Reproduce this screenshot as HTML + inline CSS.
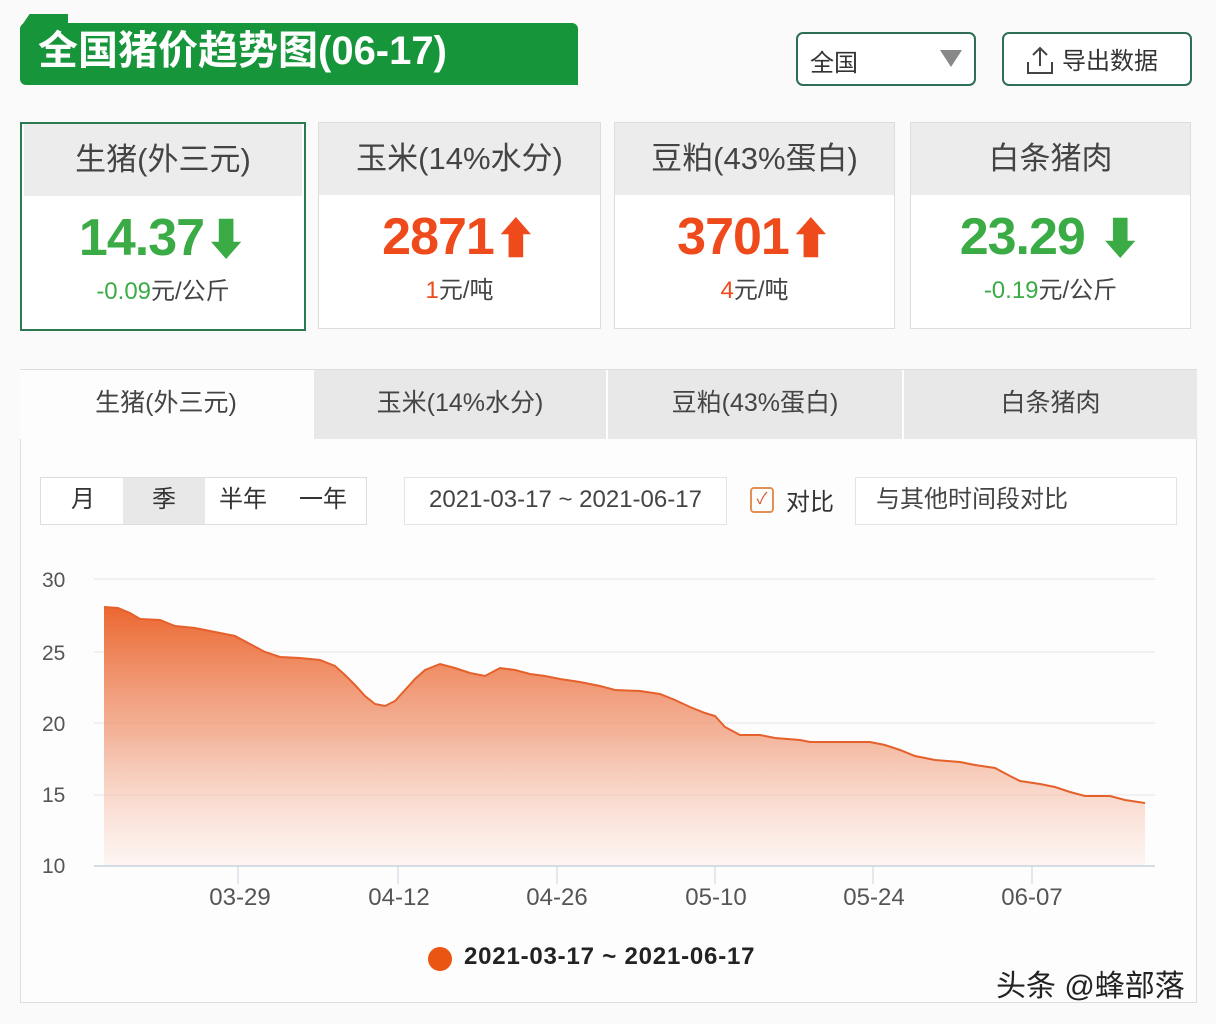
<!DOCTYPE html>
<html><head><meta charset="utf-8"><style>
*{margin:0;padding:0;box-sizing:border-box}
body{width:1216px;height:1024px;background:#fafafa;font-family:"Liberation Sans","Noto Sans CJK SC",sans-serif;position:relative;overflow:hidden;color:#333}
.abs{position:absolute}
.title{left:20px;top:23px;width:558px;height:62px;background:#17953a;border-radius:6px 6px 0 6px;color:#fff;font-weight:bold;font-size:40px;line-height:56px;padding-left:18px;letter-spacing:0}
.tab-notch{left:20px;top:14px;width:48px;height:14px;background:#17953a;clip-path:polygon(20% 0,100% 0,100% 100%,0 100%)}
.btn{border:2px solid #2e6e55;border-radius:7px;background:#fff;font-size:24px;color:#333}
.card{background:#fff;border:1px solid #ddd;text-align:center}
.card .h{height:72px;background:#ececec;font-size:31px;line-height:72px;color:#444}
.card .v{font-size:52px;font-weight:bold;margin-top:12px;line-height:60px;letter-spacing:-1px}
.card .s{font-size:24px;color:#444;margin-top:0}
.g{color:#3bab46}.r{color:#ef4a1b}
.t2{top:369px;height:70px;background:#e8e8e8;font-size:25px;line-height:66px;text-align:center;color:#444;border-top:1px solid #ddd}
</style></head><body>
<div class="abs tab-notch"></div>
<div class="abs title">全国猪价趋势图(06-17)</div>
<div class="abs btn" style="left:796px;top:32px;width:180px;height:54px;padding:9px 0 0 12px">全国<span class="abs" style="left:142px;top:16px;width:0;height:0;border-left:11px solid transparent;border-right:11px solid transparent;border-top:17px solid #888"></span></div>
<div class="abs btn" style="left:1002px;top:32px;width:190px;height:54px;padding:7px 0 0 58px">导出数据
<svg class="abs" style="left:20px;top:10px" width="32" height="32" viewBox="0 0 32 32" fill="none" stroke="#444" stroke-width="2"><path d="M16 22V4M9 11l7-7 7 7M4 18v11h24V18"/></svg></div>

<div class="abs card" style="left:20px;top:122px;width:286px;height:209px;border:2px solid #2e7a50"><div class="h" style="margin:0 2px">生猪(外三元)</div><div class="v g">14.37<span style="font-size:44px">⬇</span></div><div class="s"><span class="g">-0.09</span>元/公斤</div></div>
<div class="abs card" style="left:318px;top:122px;width:283px;height:207px"><div class="h">玉米(14%水分)</div><div class="v r">2871<span style="font-size:44px">⬆</span></div><div class="s"><span class="r">1</span>元/吨</div></div>
<div class="abs card" style="left:614px;top:122px;width:281px;height:207px"><div class="h">豆粕(43%蛋白)</div><div class="v r">3701<span style="font-size:44px">⬆</span></div><div class="s"><span class="r">4</span>元/吨</div></div>
<div class="abs card" style="left:910px;top:122px;width:281px;height:207px"><div class="h">白条猪肉</div><div class="v g">23.29 <span style="font-size:44px">⬇</span></div><div class="s"><span class="g">-0.19</span>元/公斤</div></div>

<div class="abs" style="left:20px;top:369px;width:1177px;height:634px;background:#fdfdfd;border:1px solid #ddd"></div>
<div class="abs t2" style="left:20px;width:292px;background:#fdfdfd">生猪(外三元)</div>
<div class="abs t2" style="left:314px;width:292px">玉米(14%水分)</div>
<div class="abs t2" style="left:608px;width:294px">豆粕(43%蛋白)</div>
<div class="abs t2" style="left:904px;width:293px">白条猪肉</div>

<div class="abs" style="left:40px;top:477px;width:327px;height:48px;border:1px solid #ddd;background:#fff;font-size:24px;line-height:44px">
<span class="abs" style="left:30px">月</span><span class="abs" style="left:82px;width:82px;height:46px;background:#e8e8e8;text-align:center">季</span><span class="abs" style="left:178px">半年</span><span class="abs" style="left:258px">一年</span></div>
<div class="abs" style="left:404px;top:477px;width:323px;height:48px;border:1px solid #e4e4e4;background:#fff;font-size:24px;line-height:44px;text-align:center;color:#444">2021-03-17 ~ 2021-06-17</div>
<div class="abs" style="left:750px;top:487px;width:24px;height:26px;border:2px solid #e39055;border-radius:4px;color:#d9532b;font-size:16px;text-align:center;line-height:22px">✓</div>
<div class="abs" style="left:786px;top:482px;font-size:24px">对比</div>
<div class="abs" style="left:855px;top:477px;width:322px;height:48px;border:1px solid #e4e4e4;background:#fff;font-size:24px;line-height:44px;padding-left:20px;color:#444">与其他时间段对比</div>

<svg class="abs" style="left:0;top:560px" width="1216" height="360" viewBox="0 560 1216 360">
<defs><linearGradient id="gr" x1="0" y1="600" x2="0" y2="866" gradientUnits="userSpaceOnUse"><stop offset="0" stop-color="#ea5a1e" stop-opacity=".95"/><stop offset=".5" stop-color="#f09a78" stop-opacity=".75"/><stop offset="1" stop-color="#fde8e0" stop-opacity=".4"/></linearGradient></defs>
<g stroke="#e5e5e5" stroke-width="1"><path d="M94 579H1155M94 652H1155M94 723H1155M94 795H1155"/></g>
<path d="M104 866V607L118 608 130 613 140 619 160 620 175 626 195 628 210 631 235 636 250 644 265 652 280 657 300 658 320 660 335 666 345 675 355 685 365 696 375 704 385 706 395 701 405 690 415 679 425 670 440 664 455 668 470 673 485 676 500 668 515 670 530 674 545 676 560 679 580 682 600 686 615 690 640 691 660 694 675 700 690 707 705 713 715 716 725 727 740 735 760 735 775 738 800 740 810 742 870 742 885 745 900 750 915 756 935 760 960 762 975 765 995 768 1010 776 1020 781 1040 784 1055 787 1070 792 1085 796 1110 796 1125 800 1145 803V866Z" fill="url(#gr)"/>
<path d="M104 607L118 608 130 613 140 619 160 620 175 626 195 628 210 631 235 636 250 644 265 652 280 657 300 658 320 660 335 666 345 675 355 685 365 696 375 704 385 706 395 701 405 690 415 679 425 670 440 664 455 668 470 673 485 676 500 668 515 670 530 674 545 676 560 679 580 682 600 686 615 690 640 691 660 694 675 700 690 707 705 713 715 716 725 727 740 735 760 735 775 738 800 740 810 742 870 742 885 745 900 750 915 756 935 760 960 762 975 765 995 768 1010 776 1020 781 1040 784 1055 787 1070 792 1085 796 1110 796 1125 800 1145 803" fill="none" stroke="#e5602a" stroke-width="2"/>
<path d="M94 866H1155" stroke="#c8d4e0" stroke-width="1.5"/>
<g stroke="#c8d4e0"><path d="M238 866v18M398 866v18M557 866v18M715 866v18M873 866v18M1032 866v18"/></g>
<g font-family="Liberation Sans" font-size="21" fill="#555"><text x="42" y="587">30</text><text x="42" y="660">25</text><text x="42" y="731">20</text><text x="42" y="802">15</text><text x="42" y="873">10</text></g>
<g font-family="Liberation Sans" font-size="24" fill="#555" text-anchor="middle"><text x="240" y="905">03-29</text><text x="399" y="905">04-12</text><text x="557" y="905">04-26</text><text x="716" y="905">05-10</text><text x="874" y="905">05-24</text><text x="1032" y="905">06-07</text></g>
</svg>
<div class="abs" style="left:428px;top:947px;width:24px;height:24px;border-radius:50%;background:#ea5514"></div>
<div class="abs" style="left:464px;top:943px;font-size:24px;font-weight:bold;color:#222;letter-spacing:0.8px">2021-03-17 ~ 2021-06-17</div>
<div class="abs" style="left:996px;top:961px;font-size:30px;color:#222">头条 @蜂部落</div>
</body></html>
